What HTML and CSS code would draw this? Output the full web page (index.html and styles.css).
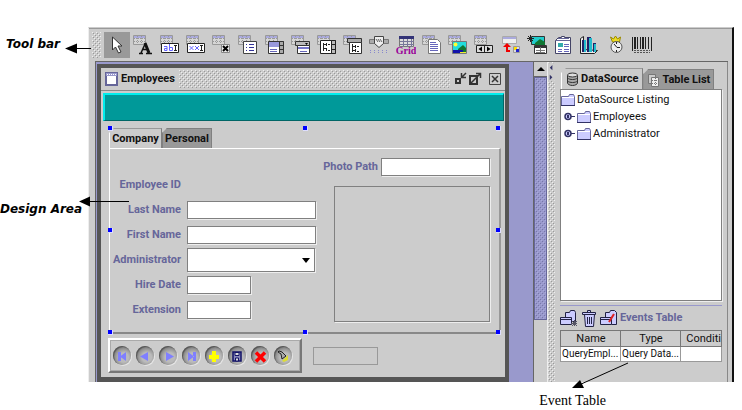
FILE: index.html
```html
<!DOCTYPE html>
<html lang="en">
<head>
<meta charset="utf-8">
<title>Form designer</title>
<link rel="stylesheet" href="styles.css">
</head>
<body>
<svg class="defs" aria-hidden="true">
  <symbol id="grid" viewBox="0 0 13 12"><path fill="#d6d6d6" stroke="#999" d="M.5.5h12v9h-12z"/><path fill="#aaaadd" d="M1 1h11v2H1z"/><path stroke="#999" stroke-dasharray="1 1" d="M1 3.500h11M1 6.500h11M4.500 1v8M8.500 1v8"/></symbol>
  <symbol id="folder" viewBox="0 0 14 14"><path fill="#ccccff" stroke="#666699" d="M.5 3.500h7l1-2h4l1 2v9H.5z"/><path stroke="#fff" d="M1 4.500h12"/><path stroke="#333366" d="M0 12.500h14"/></symbol>
  <symbol id="handle" viewBox="0 0 11 9"><circle cx="4" cy="4.500" r="3" fill="#ccccff" stroke="#333366" stroke-width="1.500"/><path fill="#333366" d="M3 3h2v3H3zM7 4h4v1H7z"/></symbol>
</svg>
<div class="figure">
  <aside class="notes">
    <p class="note note-toolbar">Tool bar</p>
    <p class="note note-design">Design Area</p>
  </aside>
  <main class="app">
    <div class="toolbar" role="toolbar" aria-label="Components">
      <span class="bumps grip"></span>
      <div class="tools">
        <button class="tool selected" aria-label="Select"><svg viewBox="0 0 20 20"><path fill="#fff" stroke="#333" d="M5.500 2v13l3-3 3 6 2.500-1-3-6H15z"/></svg></button>
        <button class="tool" aria-label="Label"><svg viewBox="0 0 20 20"><use href="#grid" width="13" height="12"/><path fill="none" stroke="#111" stroke-width="1.500" d="M6 18.500h4M13 18.500h6M8 18l4.500-10M9 14.500h6"/><path stroke="#111" stroke-width="3" d="M12 8l4 10"/></svg></button>
        <button class="tool" aria-label="Text field"><svg viewBox="0 0 20 20"><use href="#grid" width="13" height="12"/><path fill="#fff" stroke="#222" d="M1.500 8.500h17v9h-17z"/><path fill="none" stroke="#6666ff" d="M4 11.500h3v4H4.500v-2H7M9.500 9v6.500h3v-3h-3"/><path fill="none" stroke="#222" d="M14 10.500h3M14 15.500h3M15.500 10v6"/></svg></button>
        <button class="tool" aria-label="Password field"><svg viewBox="0 0 20 20"><use href="#grid" width="13" height="12"/><path fill="#fff" stroke="#222" d="M1.500 8.500h17v9h-17z"/><path fill="none" stroke="#6666ff" d="M3.500 11l4 4m0-4l-4 4M9 11l4 4m0-4l-4 4"/><path fill="none" stroke="#222" d="M14 10.500h3M14 15.500h3M15.500 10v6"/></svg></button>
        <button class="tool" aria-label="Check box"><svg viewBox="0 0 20 20"><use href="#grid" width="13" height="12"/><path fill="#eee" stroke="#888" d="M9.500 9.500h8v8h-8z"/><path stroke="#000" stroke-width="2" d="M11 11l5 5m0-5l-5 5"/></svg></button>
        <button class="tool" aria-label="List"><svg viewBox="0 0 20 20"><use href="#grid" width="13" height="12"/><path fill="#fff" stroke="#444" d="M5.500 6.500h13v12h-13z"/><path stroke="#333399" d="M8 9.500h1M8 12.500h1M8 15.500h1M11 9.500h5M11 12.500h5M11 15.500h5"/></svg></button>
        <button class="tool" aria-label="Scrolling list"><svg viewBox="0 0 20 20"><use href="#grid" width="13" height="12"/><path fill="#fff" stroke="#333" d="M3.500 6.500h15v12h-15z"/><path fill="#9999dd" d="M4 7h10v5H4z"/><path stroke="#6666bb" d="M5 14.500h7M5 16.500h7"/><path fill="#aaa" stroke="#333" d="M14.500 6.500h4v12h-4zM15 10.500h3M15 14.500h3"/></svg></button>
        <button class="tool" aria-label="Combo box"><svg viewBox="0 0 20 20"><use href="#grid" width="13" height="12"/><path fill="#bbb" stroke="#333" d="M4.500 6.500h14v4h-14z"/><path fill="#fff" stroke="#333" d="M6.500 10.500h12v8h-12z"/><path stroke="#7777cc" stroke-width="2" d="M7 13h11"/><path stroke="#6666bb" d="M9 16.500h7"/><path d="M14 8h3l-1.500 2z"/></svg></button>
        <button class="tool" aria-label="Tree list"><svg viewBox="0 0 20 20"><use href="#grid" width="13" height="12"/><path fill="#fff" stroke="#222" d="M3.500 5.500h15v13h-15z"/><path fill="none" stroke="#222" d="M6.500 8v8M6 9.500h3M6 13.500h3M9.500 8v3M9.500 13v3M11 9.500h2M11 15.500h2"/><path fill="#bbb" stroke="#222" d="M14.500 5.500h4v13h-4zM15 9.500h3M15 14.500h3"/></svg></button>
        <button class="tool" aria-label="Tree combo"><svg viewBox="0 0 20 20"><use href="#grid" width="13" height="12"/><path fill="#aaa" stroke="#333" d="M4.500 3.500h14v4h-14z"/><path fill="#fff" stroke="#333" d="M6.500 7.500h12v11h-12z"/><path fill="none" stroke="#222" d="M9.500 9v8M9 11.500h3M9 15.500h3M12.500 10v3M12.500 14v3M14 11.500h2M14 16.500h2"/></svg></button>
        <button class="tool" aria-label="Slider"><svg viewBox="0 0 20 20"><path fill="#aaa" stroke="#777" d="M.5 4.500h19v4H.5z"/><path fill="#eee" stroke="#444" d="M5.500 1.500h9v7l-4.500 4-4.500-4z"/><path stroke="#666" d="M7 4l2 3m0-3l2 3m0-3l2 3"/><path stroke="#8888cc" stroke-dasharray="1 3" d="M1 15.500h18M1 17.500h18"/></svg></button>
        <button class="tool" aria-label="Data grid"><svg viewBox="0 0 20 20"><path fill="#ddd" stroke="#777" d="M3.500 1.500h14v10h-14z"/><path fill="#333377" d="M3 1h15v3H3z"/><path stroke="#777799" d="M4 6.500h14M4 9.500h14M7.500 4v8M11.500 4v8M15.500 4v8"/><text class="grid-word" x="10" y="19" text-anchor="middle">Grid</text></svg></button>
        <button class="tool" aria-label="Text area"><svg viewBox="0 0 20 20"><use href="#grid" width="13" height="12"/><path fill="#fff" stroke="#777" d="M6.500 4.500h9l3 3v11h-12z"/><path stroke="#6666bb" d="M8 7.500h6M8 9.500h8M8 11.500h8M8 13.500h8M8 15.500h8"/></svg></button>
        <button class="tool" aria-label="Image"><svg viewBox="0 0 20 20"><use href="#grid" width="13" height="12"/><path fill="#22dddd" stroke="#777" d="M4.500 6.500h14v12h-14z"/><circle cx="7.500" cy="9.500" r="2" fill="#ffff33"/><path fill="#117733" d="M10 14l5-4 3 3v4h-8z"/><path fill="#1111aa" d="M5 15h10v3H5z"/><path fill="#eeee33" d="M12 17h6v1h-6z"/></svg></button>
        <button class="tool" aria-label="Navigator"><svg viewBox="0 0 20 20"><use href="#grid" width="13" height="12"/><path fill="#ddd" stroke="#222" d="M2.500 10.500h16v7h-16zM10.500 10v8"/><path d="M8 11.500v5L4.500 14zM13 11.500v5l3.500-2.500z"/></svg></button>
        <button class="tool" aria-label="Lookup"><svg viewBox="0 0 20 20"><path fill="#eee" stroke="#aaa" d="M1.500 1.500h14v7h-14z"/><path fill="#aaaadd" d="M2 2h13v2H2z"/><path fill="none" stroke="#e00" stroke-width="2" d="M9 16H6v-5"/><path fill="#e00" d="M2 12l4-4 4 4z"/><path fill="#ddd" stroke="#999" d="M12.500 11.500h6v6h-6z"/><path fill="#ffdd00" d="M13 12h3v3h-3z"/><path fill="#2222cc" d="M15 14h3v3h-3z"/></svg></button>
        <button class="tool" aria-label="Image table"><svg viewBox="0 0 20 20"><path fill="#22cccc" stroke="#333" d="M4.500 1.500h13v8h-13z"/><path fill="#117733" d="M8 8l5-4 5 3v3H8z"/><path stroke="#222" d="M0 3.500h7M3.500 0v7M1 1l5 5m0-5L1 6"/><path fill="#fff" stroke="#333" d="M7.500 10.500h12v8h-12z"/><path fill="#333" d="M8 10h11v3H8z"/><path stroke="#777" d="M9 15.500h9M9 17.500h9M13.500 12v6"/></svg></button>
        <button class="tool" aria-label="Tabbed pane"><svg viewBox="0 0 20 20"><path fill="#fff" stroke="#444466" d="M2.500 5.500l3-3h3v-1h3v1h6v16h-15z"/><path stroke="#666699" d="M3 5.500h14M5 3.500h11"/><path fill="#33aaaa" d="M5 8h5v4H5z"/><path stroke="#6666bb" d="M11 9.500h5M11 11.500h5M5 14.500h4M5 16.500h4M11 14.500h5M11 16.500h5"/></svg></button>
        <button class="tool" aria-label="Chart"><svg viewBox="0 0 20 20"><path fill="#eee" stroke="#222" d="M1.500 3.500l3-2v13l14 1-3 3h-14z"/><path fill="#222266" d="M3 5h3v12H3zM8 2h4v15H8zM14 8h3v9h-3z"/><path fill="#22bbcc" d="M5 5h2v12H5zM10 3h3v14h-3zM15 9h2v8h-2z"/></svg></button>
        <button class="tool" aria-label="Timer"><svg viewBox="0 0 20 20"><path fill="#eedd22" stroke="#998800" d="M4.500 2l3 2 2-3 2 3 3-2-1 5h-7z"/><circle cx="10.500" cy="12" r="5.500" fill="#eee" stroke="#555"/><path stroke="#222" fill="none" d="M8 9l3 3.500h3M10.500 7v2M10.500 15v2"/></svg></button>
        <button class="tool" aria-label="Barcode"><svg viewBox="0 0 20 20"><path stroke="#222" d="M.5 2v14M5.500 2v12M8.500 2v12M13.500 2v12M16.500 2v12M19.500 2v14"/><path stroke="#222" stroke-width="2" d="M3 2v12M11 2v12"/><path stroke="#555" stroke-dasharray="2 1" d="M2 15.500h16M2 17.500h16"/></svg></button>
      </div>
    </div>
    <div class="workspace">
      <section class="desktop">
        <div class="window">
          <header class="titlebar">
            <svg class="win-icon" viewBox="0 0 14 14"><path fill="#fff" stroke="#666699" stroke-width="2" d="M1 1h11v12H1z"/><path fill="#9999cc" d="M1 1h11v3H1z"/><path stroke="#fff" stroke-dasharray="1 1" d="M2 2.500h9"/></svg>
            <h1>Employees</h1>
            <span class="bumps title-bumps"></span>
            <button class="win-btn" aria-label="Minimize"><svg viewBox="0 0 14 14"><path fill="none" stroke="#333" stroke-width="2" d="M3 7h4v4H3z"/><path fill="none" stroke="#333" stroke-width="1.500" d="M13 1L9 5M8.500 1v4.500H13"/></svg></button>
            <button class="win-btn" aria-label="Maximize"><svg viewBox="0 0 14 14"><path fill="none" stroke="#333" stroke-width="2" d="M2 4h7v8H2z"/><path fill="none" stroke="#333" stroke-width="1.500" d="M3 11l9-9M8 1.500h4.500V6"/></svg></button>
            <button class="win-btn close" aria-label="Close"><svg viewBox="0 0 14 14"><path fill="none" stroke="#444" d="M1.500 1.500h11v11h-11z"/><path stroke="#333" stroke-width="1.500" d="M4 4l6 6m0-6l-6 6"/></svg></button>
          </header>
          <div class="banner"></div>
          <div class="design">
            <div class="tabs" role="tablist">
              <button class="tab active" role="tab" aria-selected="true">Company</button>
              <button class="tab" role="tab" aria-selected="false">Personal</button>
            </div>
            <form class="pane">
              <div class="fields">
                <span class="caption">Employee ID</span><span></span>
                <label for="last">Last Name</label><input id="last" type="text">
                <label for="first">First Name</label><input id="first" type="text">
                <label for="admin">Administrator</label><span class="combo"><select id="admin"><option></option></select></span>
                <label for="hire">Hire Date</label><input id="hire" class="short" type="text">
                <label for="ext">Extension</label><input id="ext" class="short" type="text">
              </div>
              <div class="photo-col">
                <div class="photo-path"><label for="photo">Photo Path</label><input id="photo" type="text"></div>
                <div class="photo"></div>
              </div>
            </form>
            <i class="dot n w"></i><i class="dot n c"></i><i class="dot n e"></i>
            <i class="dot m w"></i><i class="dot m e"></i>
            <i class="dot s w"></i><i class="dot s c"></i><i class="dot s e"></i>
          </div>
          <footer class="record-bar">
            <div class="navigator">
              <button aria-label="First"><svg viewBox="0 0 18 18"><path fill="#7f7fff" d="M5 5h3v9H5zM13 5v9L7 9.500z"/></svg></button>
              <button aria-label="Previous"><svg viewBox="0 0 18 18"><path fill="#7f7fff" d="M12 5v9L4 9.500z"/></svg></button>
              <button aria-label="Next"><svg viewBox="0 0 18 18"><path fill="#7f7fff" d="M7 5v9l8-4.500z"/></svg></button>
              <button aria-label="Last"><svg viewBox="0 0 18 18"><path fill="#7f7fff" d="M11 5h3v9h-3zM6 5v9l6-4.500z"/></svg></button>
              <button aria-label="Add"><svg viewBox="0 0 18 18"><path fill="#ffff00" d="M7 4h4v4h3v4h-3v3H7v-3H4V8h3z"/></svg></button>
              <button aria-label="Save"><svg viewBox="0 0 18 18"><path fill="#8888bb" stroke="#111166" stroke-width="1.500" d="M5 5h8v9H5z"/><path fill="#ddd" stroke="#111166" d="M7 5.500h4v3H7zM7.500 11h3v3h-3z"/></svg></button>
              <button aria-label="Delete"><svg viewBox="0 0 18 18"><path stroke="#ff0000" stroke-width="3.500" d="M5 5.500l9 9M14 5.500l-9 9"/></svg></button>
              <button aria-label="Find"><svg viewBox="0 0 18 18"><path fill="#dddd33" d="M8 14l6-6v5l-4 2z"/><path fill="#aaa" stroke="#222" d="M5 4l3 1 4 4-4 3-1-5-3-2z"/></svg></button>
            </div>
            <div class="status"></div>
          </footer>
        </div>
      </section>
      <div class="scrollbar"><button aria-label="Scroll up"></button><span class="bumps thumb"></span></div>
      <div class="splitter bumps"><svg viewBox="0 0 8 20"><path fill="#ccc" d="M0 0h8v20H0z"/><path fill="#333366" d="M5 2v6L2 5zM2 13v6l3-3z"/></svg></div>
      <aside class="side">
        <div class="side-tabs" role="tablist">
          <button class="tab active" role="tab" aria-selected="true"><svg viewBox="0 0 13 14"><path fill="#aaa" stroke="#333" d="M1.500 3v8c0 1 2 2.500 5 2.500s5-1.500 5-2.500V3M1.500 6c2 2 8 2 10 0M1.500 9c2 2 8 2 10 0"/><ellipse cx="6.500" cy="3" rx="5" ry="2" fill="#ddd" stroke="#333"/></svg>DataSource</button>
          <button class="tab" role="tab" aria-selected="false"><svg viewBox="0 0 13 14"><path fill="#ccc" stroke="#777" d="M1.500 1.500h7v9h-7z"/><path fill="#eee" stroke="#777" d="M4.500 4.500h7v9h-7z"/><path stroke="#777" stroke-dasharray="1 1" d="M5 7.500h7M5 10.500h7M8.500 5v8"/></svg>Table List</button>
        </div>
        <div class="tree-frame">
          <ul class="tree">
            <li><svg class="folder"><use href="#folder"/></svg>DataSource Listing</li>
            <li class="child"><svg class="knob"><use href="#handle"/></svg><svg class="folder"><use href="#folder"/></svg>Employees</li>
            <li class="child"><svg class="knob"><use href="#handle"/></svg><svg class="folder"><use href="#folder"/></svg>Administrator</li>
          </ul>
        </div>
        <div class="events-bar">
          <button aria-label="New event"><svg viewBox="0 0 18 18"><path fill="#ccccff" stroke="#222244" d="M5.500 8V3.500h4l1-2h4l1 2v9h-3"/><path fill="#ccccff" stroke="#222244" d="M.5 8.500h11v7H.5z"/><path stroke="#222244" d="M1 10.500h10"/><path stroke="#555566" d="M11 14.500h6M14.500 11v6M12 12l5 5m0-5l-5 5"/></svg></button>
          <button aria-label="Delete event"><svg viewBox="0 0 18 18"><path fill="#ccccff" stroke="#222244" d="M4.500 5.500h10l-1 12h-8zM2.500 3.500h13v2h-13zM7.500 1.500h3v2h-3z"/><path stroke="#222244" d="M7.500 8v7M9.500 8v7M11.500 8v7"/></svg></button>
          <button aria-label="Edit event"><svg viewBox="0 0 18 18"><path fill="#ccccff" stroke="#222244" d="M5.500 8V3.500h4l1-2h4l2 2v12h-5"/><path fill="#ccccff" stroke="#222244" d="M.5 8.500h11v7H.5zM1 10.500h10"/><path stroke="#dd2222" stroke-width="2" d="M9 13l5-8"/></svg></button>
          <h2>Events Table</h2>
        </div>
        <div class="events">
          <table>
            <thead><tr><th>Name</th><th>Type</th><th class="last">Conditi</th></tr></thead>
            <tbody><tr><td>QueryEmpl...</td><td>Query Data...</td><td></td></tr></tbody>
          </table>
        </div>
      </aside>
    </div>
  </main>
  <p class="event-note">Event Table</p>
  <svg class="arrows" viewBox="0 0 742 410" aria-hidden="true"><path stroke="#000" d="M74 48.500h17M88 201.500h41M628 363l-49 22"/><path d="M65 48.500l12-5v10zM79 201.500l11-5v10zM572 388l8-8 4 8z"/></svg>
</div>
</body>
</html>
```
FILE: styles.css
```css
* { box-sizing: border-box; }

body {
  margin: 0;
  background: #fff;
  color: #111;
  font: 11px/16px Roboto, sans-serif;
}

button, input, select { font: inherit; color: inherit; margin: 0; padding: 0; border: 0; border-radius: 0; }
button { background: none; }
h1, h2, p, ul { margin: 0; padding: 0; font-size: inherit; }
svg { display: block; }
.defs { position: absolute; width: 0; height: 0; }

.figure {
  position: relative;
  display: grid;
  grid-template-columns: 88px minmax(0, 1fr);
  padding: 27px 8px 0 0;
}

.note { font: italic bold 12px/14px "DejaVu Sans", sans-serif; color: #000; white-space: nowrap; }
.note-toolbar { padding: 10px 0 0 6px; }
.note-design { padding: 151px 0 0 0; }
.event-note {
  grid-column: 2;
  padding: 11px 128px 0 0;
  text-align: right;
  font: 14px/16px "Liberation Serif", serif;
  color: #000;
}
.arrows { position: absolute; top: 0; left: 0; width: 742px; height: 410px; pointer-events: none; }

.bumps {
  background:
    conic-gradient(from 270deg at 1px 1px, var(--hi, #eee) 90deg, transparent 0) 0 0 / 4px 4px,
    conic-gradient(from 270deg at 1px 1px, var(--hi, #eee) 90deg, transparent 0) 2px 2px / 4px 4px,
    conic-gradient(from 270deg at 1px 1px, var(--lo, #999) 90deg, transparent 0) 1px 1px / 4px 4px,
    conic-gradient(from 270deg at 1px 1px, var(--lo, #999) 90deg, transparent 0) 3px 3px / 4px 4px,
    var(--base, #ccc);
}

.app { background: #ccc; border-right: 2px solid #111; border-left: 1px solid #eee; border-top: 1px solid #ccc; }

.toolbar {
  display: flex;
  align-items: center;
  gap: 3px;
  height: 33px;
  padding: 0 3px;
  border-top: 1px solid #999;
}
.grip { width: 9px; height: 26px; }
.tools { display: grid; grid-template-columns: repeat(21, minmax(0, 1fr)); flex: 0 1 551px; }
.tool { display: grid; place-items: center; height: 26px; }
.tool svg { width: 20px; height: 20px; }
.tool.selected { background: #999; }
.grid-word { font: bold 10px "Liberation Serif", serif; fill: #990099; }

.workspace { display: flex; margin: 0 4px 0 6px; border-top: 1px solid #666; border-left: 1px solid #666; }

.desktop { flex: 1; min-width: 0; padding: 2px 24px 0 1px; background: #9999cc; }
.window {
  background: #ccc;
  border: solid #555;
  border-width: 4px 4px 5px 4px;
}
.titlebar { display: flex; align-items: center; height: 23px; padding: 0 3px 0 4px; border-bottom: 1px solid #888; }
.titlebar h1 { padding: 0 4px 0 2px; font-weight: bold; }
.win-icon { width: 14px; height: 14px; }
.title-bumps { flex: 1; height: 18px; margin-right: 2px; }
.win-btn { width: 14px; height: 14px; margin-left: 1px; }
.win-btn.close { margin-left: 6px; }

.banner {
  height: 28px;
  margin: 2px 1px 0 2px;
  background: #009999;
  border: solid;
  border-width: 2px 1px 1px 2px;
  border-color: #00eeee #006666 #006666 #00eeee;
}

.design { position: relative; margin: 5px 4px 0 8px; }
.tabs { display: flex; padding-top: 2px; }
.tab {
  height: 20px;
  padding: 0 4px;
  background: #999;
  border: solid #808080;
  border-width: 1px 1px 0 1px;
  font-weight: bold;
  white-space: nowrap;
  clip-path: polygon(5px 0, 100% 0, 100% 100%, 0 100%, 0 5px);
}
.tab.active { background: #ccc; border-color: #999 #808080 #999 #fff; }
.tabs .tab { width: 50px; padding: 0; }
.tabs .tab.active { width: 53px; }

.pane {
  display: flex;
  justify-content: space-between;
  padding: 9px 9px 10px 0;
  border: solid;
  border-width: 1px 2px 2px 1px;
  border-color: #fff #999 #888 #fff;
}
.fields {
  display: grid;
  grid-template-columns: 71px 129px;
  grid-auto-rows: 25px;
  column-gap: 6px;
  align-items: center;
  padding-top: 14px;
}
.fields label, .caption { text-align: right; }
label, .caption, .events-bar h2 { color: #66669a; font-weight: bold; white-space: nowrap; }
input {
  width: 100%;
  height: 18px;
  padding: 0 3px;
  background: #fff;
  border: 1px solid #808080;
  box-shadow: 1px 1px #eee;
}
input.short { width: 64px; }
.combo { position: relative; }
.combo::after {
  content: "";
  position: absolute;
  right: 6px;
  top: 10px;
  border: solid transparent;
  border-width: 5px 4px 0;
  border-top-color: #000;
  pointer-events: none;
}
select { display: block; width: 128px; height: 24px; appearance: none; background: #fff; border: 1px solid #808080; box-shadow: 1px 1px #eee; }

.photo-col { display: flex; flex-direction: column; gap: 10px; width: 168px; }
.photo-path { display: grid; grid-template-columns: 1fr 109px; align-items: center; gap: 3px; }
.photo-path label { text-align: right; }
.photo { flex: 1; margin-left: 12px; border: 1px solid #808080; box-shadow: 1px 1px #eee; }

.dot { position: absolute; width: 5px; height: 5px; background: #0000ff; border: solid #ddddff; border-width: 0 1px 1px 0; }
.n { top: 0; }
.m { top: calc(50% - 2px); }
.s { bottom: -1px; }
.w { left: -1px; }
.c { left: calc(50% - 2px); }
.e { right: 0; }

.record-bar { display: flex; align-items: center; gap: 11px; padding: 4px 7px 4px; }
.navigator {
  display: flex;
  gap: 5px;
  padding: 6px 8px 6px 3px;
  border: 2px solid;
  border-color: #fff #777 #777 #fff;
  box-shadow: inset 0 0 0 1px #aaa;
}
.navigator button {
  width: 18px;
  height: 19px;
  border-radius: 50%;
  background: radial-gradient(circle at 60% 60%, #bbb 30%, #777 75%);
  box-shadow: inset 1px 1px 1px #555, 1px 1px #e4e4e4;
}
.navigator svg { width: 18px; height: 18px; }
.status { width: 65px; height: 18px; border: 1px solid #999; }

.scrollbar { display: flex; flex-direction: column; width: 14px; border-left: 1px solid #666; padding-bottom: 62px; background: #ccc; }
.scrollbar button { display: grid; place-items: center; height: 15px; border-bottom: 1px solid #666; }
.scrollbar button::after { content: ""; border: solid transparent; border-width: 0 4px 4px; border-bottom-color: #000; }
.thumb { --base: #9999cc; --hi: #aaaadd; --lo: #7777aa; flex: 1; border: 1px solid #666699; }
.splitter { width: 8px; border-left: 1px solid #eee; }
.splitter svg { width: 7px; height: 20px; }

.side { display: flex; flex-direction: column; width: 173px; padding: 6px 5px 20px 5px; border-right: 1px solid #888; }
.side-tabs { display: flex; align-items: flex-end; margin-left: 1px; }
.side-tabs .tab { display: flex; align-items: center; gap: 2px; padding: 0 3px; }
.side-tabs .tab.active { height: 21px; padding: 0 4px; }
.side-tabs svg { width: 13px; height: 14px; }
.tree-frame { flex: 1; padding: 0 1px 1px 0; border: 1px solid #808080; box-shadow: 1px 1px #eee; background: #fff; }
.tree { list-style: none; padding-top: 1px; }
.tree li { display: flex; align-items: center; gap: 2px; height: 17px; padding-left: 0; }
.tree .child { padding-left: 3px; }
.folder { width: 14px; height: 14px; }
.knob { width: 11px; height: 9px; }

.events-bar { display: flex; align-items: center; gap: 2px; height: 25px; margin-top: 4px; border-top: 1px solid #9999cc; }
.events-bar button { width: 18px; height: 18px; }
.events-bar svg { width: 18px; height: 18px; }
table { width: 100%; table-layout: fixed; border-collapse: collapse; font-size: 10px; }
th, td { width: 60px; height: 15px; padding: 0 0 0 1px; line-height: 14px; font-weight: normal; white-space: nowrap; border: 1px solid #999; }
th { background: #ccc; border-color: #777; height: 16px; font-size: 11px; }
th.last { width: auto; text-align: right; }
td { background: #fff; }
```
